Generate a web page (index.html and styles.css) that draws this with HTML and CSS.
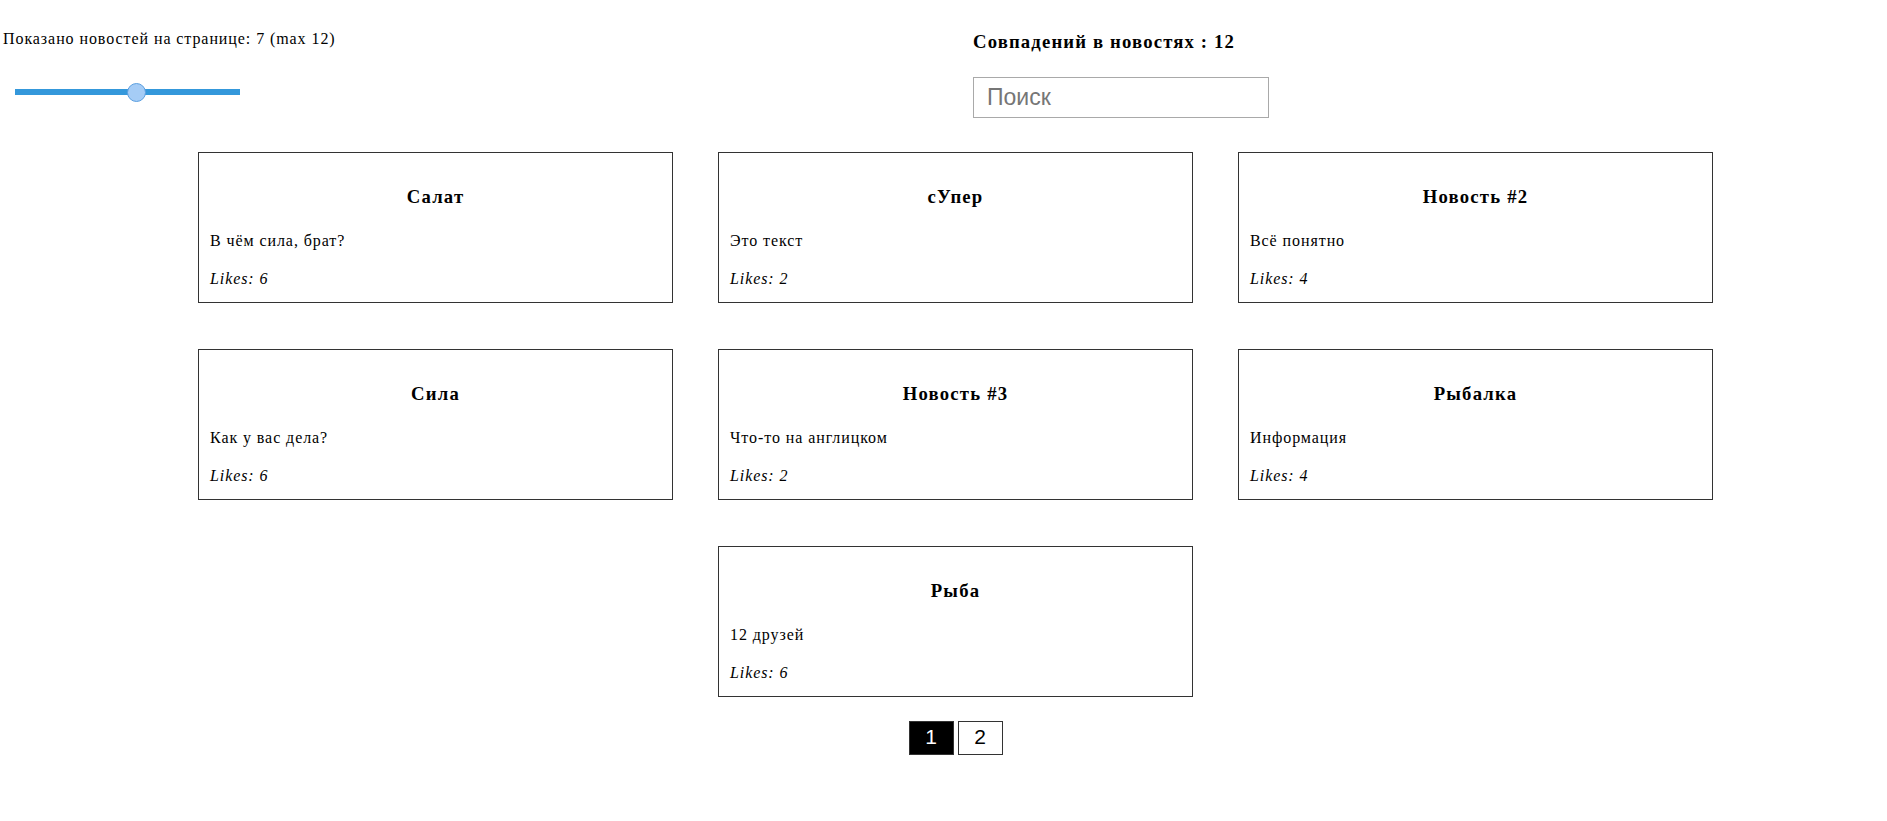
FILE: index.html
```html
<!DOCTYPE html>
<html lang="ru">
<head>
<meta charset="utf-8">
<title>Новости</title>
<link rel="stylesheet" href="styles.css">
</head>
<body>
<header class="header">
  <div class="controls">
    <p class="count-text">Показано новостей на странице: 7 (max 12)</p>
    <input class="range" type="range" min="1" max="12" value="7">
  </div>
  <div class="search-block">
    <h3 class="matches">Совпадений в новостях : 12</h3>
    <input class="search" type="text" placeholder="Поиск">
  </div>
</header>
<main class="main">
  <div class="cards">
    <div class="card"><h3 class="card-title">Салат</h3><p class="card-text">В чём сила, брат?</p><p class="likes">Likes: 6</p></div>
    <div class="card"><h3 class="card-title">сУпер</h3><p class="card-text">Это текст</p><p class="likes">Likes: 2</p></div>
    <div class="card"><h3 class="card-title">Новость #2</h3><p class="card-text">Всё понятно</p><p class="likes">Likes: 4</p></div>
    <div class="card"><h3 class="card-title">Сила</h3><p class="card-text">Как у вас дела?</p><p class="likes">Likes: 6</p></div>
    <div class="card"><h3 class="card-title">Новость #3</h3><p class="card-text">Что-то на англицком</p><p class="likes">Likes: 2</p></div>
    <div class="card"><h3 class="card-title">Рыбалка</h3><p class="card-text">Информация</p><p class="likes">Likes: 4</p></div>
    <div class="card"><h3 class="card-title">Рыба</h3><p class="card-text">12 друзей</p><p class="likes">Likes: 6</p></div>
  </div>
  <nav class="pager">
    <span class="page-btn active">1</span>
    <span class="page-btn">2</span>
  </nav>
</main>
</body>
</html>
```

FILE: styles.css
```css
html, body {
  margin: 0;
  padding: 0;
  background: #fff;
}

body {
  font-family: "Liberation Serif", "Times New Roman", serif;
  font-size: 16px;
  color: #000;
  letter-spacing: 0.92px;
}

.header {
  display: flex;
}

.controls {
  width: 973px;
  box-sizing: border-box;
  padding: 30px 0 0 3px;
}

.count-text {
  margin: 0;
  line-height: 18px;
}

.range {
  -webkit-appearance: none;
  appearance: none;
  display: block;
  width: 225px;
  height: 20px;
  margin: 34px 0 0 12px;
  padding: 0;
  background: transparent;
}

.range::-webkit-slider-runnable-track {
  height: 6px;
  background: #3498db;
  border: none;
}

.range::-webkit-slider-thumb {
  -webkit-appearance: none;
  appearance: none;
  width: 19px;
  height: 19px;
  margin-top: -6.5px;
  border-radius: 50%;
  background: #a5ccf6;
  border: 1px solid #5b9fe0;
  box-sizing: border-box;
}

.search-block {
  padding-top: 31px;
}

.matches {
  margin: 0;
  font-size: 18.72px;
  line-height: 22px;
  font-weight: bold;
  letter-spacing: 1.15px;
}

.search {
  display: block;
  box-sizing: border-box;
  width: 296px;
  height: 41px;
  margin-top: 24px;
  padding: 0 13px;
  border: 1px solid #a9a9a9;
  border-radius: 0;
  font-family: "Liberation Sans", Arial, sans-serif;
  font-size: 23px;
  letter-spacing: 0;
  color: #000;
  outline: none;
}

.search::placeholder {
  color: #767676;
}

.main {
  width: 1515px;
  margin: 34px 0 0 198px;
}

.cards {
  display: flex;
  flex-wrap: wrap;
  justify-content: center;
  column-gap: 45px;
  row-gap: 46px;
}

.card {
  width: 475px;
  box-sizing: border-box;
  border: 1px solid #333;
  padding: 33px 11px 13px;
}

.card-title {
  margin: 0 0 23px;
  font-size: 18.72px;
  line-height: 22px;
  font-weight: bold;
  text-align: center;
  letter-spacing: 1.2px;
}

.card-text {
  margin: 0 0 18px;
  line-height: 20px;
}

.likes {
  margin: 0;
  line-height: 20px;
  font-style: italic;
}

.pager {
  display: flex;
  justify-content: center;
  gap: 4px;
  margin-top: 24px;
}

.page-btn {
  display: flex;
  align-items: center;
  justify-content: center;
  width: 45px;
  height: 34px;
  box-sizing: border-box;
  padding-bottom: 2px;
  border: 1px solid #333;
  font-family: "Liberation Sans", Arial, sans-serif;
  font-size: 21px;
  letter-spacing: 0;
  color: #000;
  background: #fff;
}

.page-btn.active {
  background: #000;
  color: #fff;
}
```
